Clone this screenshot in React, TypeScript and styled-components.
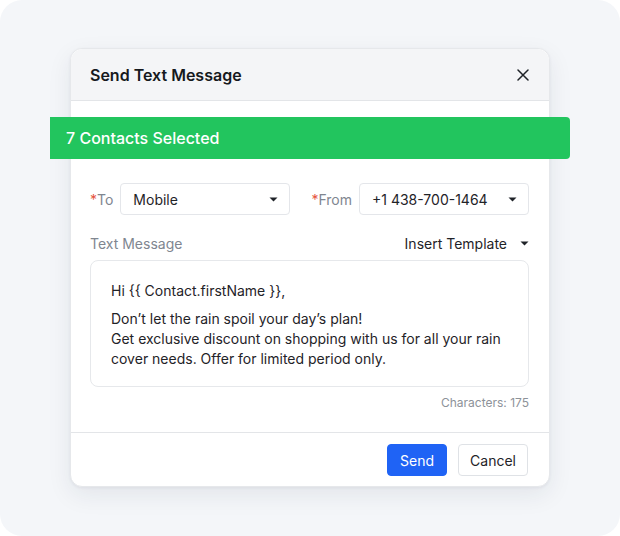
import React from 'react';
import styled, { createGlobalStyle } from 'styled-components';

const GlobalStyle = createGlobalStyle`
  html, body {
    margin: 0;
    padding: 0;
    background: #ffffff;
  }
  body {
    font-family: Inter, "Noto Sans", "Liberation Sans", sans-serif;
    color: #1f2328;
    -webkit-font-smoothing: antialiased;
  }
`;

const Caret: React.FC = () => (
  <svg width="9" height="5" viewBox="0 0 9 5">
    <path d="M0.5 0.5 L8.5 0.5 L4.5 4.5 Z" fill="#1f2328" />
  </svg>
);

const CloseIcon: React.FC = () => (
  <svg width="12" height="12" viewBox="0 0 12 12">
    <path d="M1 1 L11 11 M11 1 L1 11" stroke="#1f2328" strokeWidth="1.5" strokeLinecap="round" />
  </svg>
);

export default function App() {
  return (
    <>
      <GlobalStyle />
      <PageS>
        <ModalS>
          <HeaderS>
            <TitleS>Send Text Message</TitleS>
            <CloseBtnS aria-label="Close">
              <CloseIcon />
            </CloseBtnS>
          </HeaderS>
          <BodyS>
            <BannerS>7 Contacts Selected</BannerS>
            <RowS>
              <FieldS>
                <LabelS>
                  <ReqS>*</ReqS>To
                </LabelS>
                <SelectS>
                  <span>Mobile</span>
                  <Caret />
                </SelectS>
              </FieldS>
              <FieldS>
                <LabelS>
                  <ReqS>*</ReqS>From
                </LabelS>
                <SelectS>
                  <span>+1 438-700-1464</span>
                  <Caret />
                </SelectS>
              </FieldS>
            </RowS>
            <MessageHeadS>
              <LabelS>Text Message</LabelS>
              <TemplateBtnS>
                Insert Template
                <Caret />
              </TemplateBtnS>
            </MessageHeadS>
            <TextBoxS>
              <ParaS>Hi {'{{'} Contact.firstName {'}}'},</ParaS>
              <ParaS>
                Don’t let the rain spoil your day’s plan!
                <br />
                Get exclusive discount on shopping with us for all your rain
                <br />
                cover needs. Offer for limited period only.
              </ParaS>
            </TextBoxS>
            <CountS>Characters: 175</CountS>
          </BodyS>
          <FooterS>
            <ButtonS $primary>Send</ButtonS>
            <ButtonS>Cancel</ButtonS>
          </FooterS>
        </ModalS>
      </PageS>
    </>
  );
}

const PageS = styled.div`
  width: 620px;
  height: 536px;
  box-sizing: border-box;
  background: #f4f6f9;
  border-radius: 22px;
  padding-top: 48px;
  display: flex;
  justify-content: center;
  align-items: flex-start;
`;

const ModalS = styled.div`
  width: 480px;
  background: #fff;
  border-radius: 12px;
  border: 1px solid #e6e8eb;
  box-sizing: border-box;
  box-shadow: 0 8px 24px rgba(30, 40, 60, 0.08), 0 1px 3px rgba(30, 40, 60, 0.06);
`;

const HeaderS = styled.div`
  height: 52px;
  box-sizing: border-box;
  background: #f4f5f7;
  border-bottom: 1px solid #e3e5e8;
  border-radius: 12px 12px 0 0;
  display: flex;
  align-items: center;
  justify-content: space-between;
  padding: 0 20px 0 19px;
`;

const TitleS = styled.h2`
  margin: 0;
  font-size: 16px;
  font-weight: 600;
  color: #16191d;
`;

const CloseBtnS = styled.button`
  border: none;
  background: none;
  padding: 0;
  display: flex;
  cursor: pointer;
`;

const BodyS = styled.div`
  padding: 16px 20px 0 19px;
  display: flex;
  flex-direction: column;
`;

const BannerS = styled.div`
  margin: 0 -41px 0 -40px;
  height: 42px;
  background: #22c55e;
  border-radius: 0 4px 4px 0;
  color: #fff;
  font-size: 16px;
  font-weight: 500;
  display: flex;
  align-items: center;
  padding-left: 16px;
`;

const RowS = styled.div`
  margin-top: 24px;
  display: flex;
  justify-content: space-between;
`;

const FieldS = styled.div`
  display: flex;
  align-items: center;
  gap: 7px;
`;

const LabelS = styled.span`
  font-size: 14px;
  color: #808690;
`;

const ReqS = styled.span`
  color: #e5533d;
`;

const SelectS = styled.div`
  width: 170px;
  height: 32px;
  box-sizing: border-box;
  border: 1px solid #e4e6ea;
  border-radius: 4px;
  display: flex;
  align-items: center;
  justify-content: space-between;
  padding: 0 11px 0 12px;
  font-size: 14px;
  color: #1f2328;
`;

const MessageHeadS = styled.div`
  margin-top: 20px;
  display: flex;
  align-items: center;
  justify-content: space-between;
`;

const TemplateBtnS = styled.button`
  border: none;
  background: none;
  padding: 0;
  font-family: inherit;
  font-size: 14px;
  color: #1f2328;
  display: flex;
  align-items: center;
  gap: 13px;
  cursor: pointer;
`;

const TextBoxS = styled.div`
  margin-top: 8px;
  height: 127px;
  box-sizing: border-box;
  border: 1px solid #e6e8eb;
  border-radius: 8px;
  padding: 20px 20px;
  font-size: 14px;
  line-height: 20px;
  color: #1f2328;
`;

const ParaS = styled.p`
  margin: 0 0 8px;
`;

const CountS = styled.div`
  align-self: flex-end;
  margin-top: 8px;
  font-size: 12px;
  color: #8d9299;
`;

const FooterS = styled.div`
  margin-top: 22px;
  border-top: 1px solid #e3e5e8;
  padding: 11px 21px 10px;
  display: flex;
  justify-content: flex-end;
  gap: 11px;
`;

const ButtonS = styled.button<{ $primary?: boolean }>`
  height: 32px;
  padding: 0 ${(p) => (p.$primary ? '12px' : '11px')};
  border-radius: 4px;
  font-family: inherit;
  font-size: 14px;
  cursor: pointer;
  border: 1px solid ${(p) => (p.$primary ? '#1f63f5' : '#dfe2e6')};
  background: ${(p) => (p.$primary ? '#1f63f5' : '#fff')};
  color: ${(p) => (p.$primary ? '#fff' : '#1f2328')};
`;
